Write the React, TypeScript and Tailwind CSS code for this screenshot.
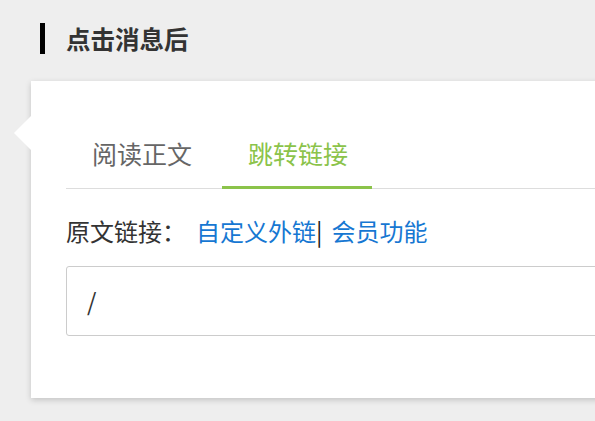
import React from "react";

export default function App() {
  return (
    <div
      className="w-[595px] h-[421px] overflow-hidden bg-[#eeeeee] relative"
      style={{ fontFamily: '"Noto Sans CJK SC", "Noto Sans", sans-serif' }}
    >
      <div className="flex items-center gap-[21px] ml-[40px] pt-[23px]">
        <div className="w-[5px] h-[31px] bg-black" />
        <div className="text-[24.5px] leading-[31px] font-bold text-[#333333]">点击消息后</div>
      </div>

      <div className="relative mt-[27px] ml-[31px] w-[640px] bg-white shadow-[0_2px_6px_rgba(0,0,0,0.18)] pt-[56px] px-[35px] pb-[62px]">
        <div className="absolute left-[-17px] top-[35px] w-0 h-0 border-y-[17px] border-y-transparent border-r-[17px] border-r-white" />

        <div className="flex border-b border-[#dddddd]">
          <div className="pl-[26px] pr-[30px] pb-[19px] text-[25px] leading-[32px] text-[#666666]">阅读正文</div>
          <div className="relative pl-[26px] pr-[24px] pb-[19px] text-[25px] leading-[32px] text-[#8bc34a]">
            跳转链接
            <div className="absolute left-0 right-0 bottom-[-1px] h-[3px] bg-[#8bc34a]" />
          </div>
        </div>

        <div className="mt-[26px] text-[24px] leading-[32px] text-[#333333] flex items-center">
          <span>原文链接：</span>
          <span className="text-[#1677d2] ml-[10px]">自定义外链</span>
          <span className="text-[#222222]">|</span>
          <span className="text-[#1677d2] ml-[9px]">会员功能</span>
        </div>

        <div className="mt-[19px] h-[70px] border border-[#cccccc] rounded-[3px] flex items-center pl-[20px] text-[24px] text-[#333333]">
          /
        </div>
      </div>
    </div>
  );
}
